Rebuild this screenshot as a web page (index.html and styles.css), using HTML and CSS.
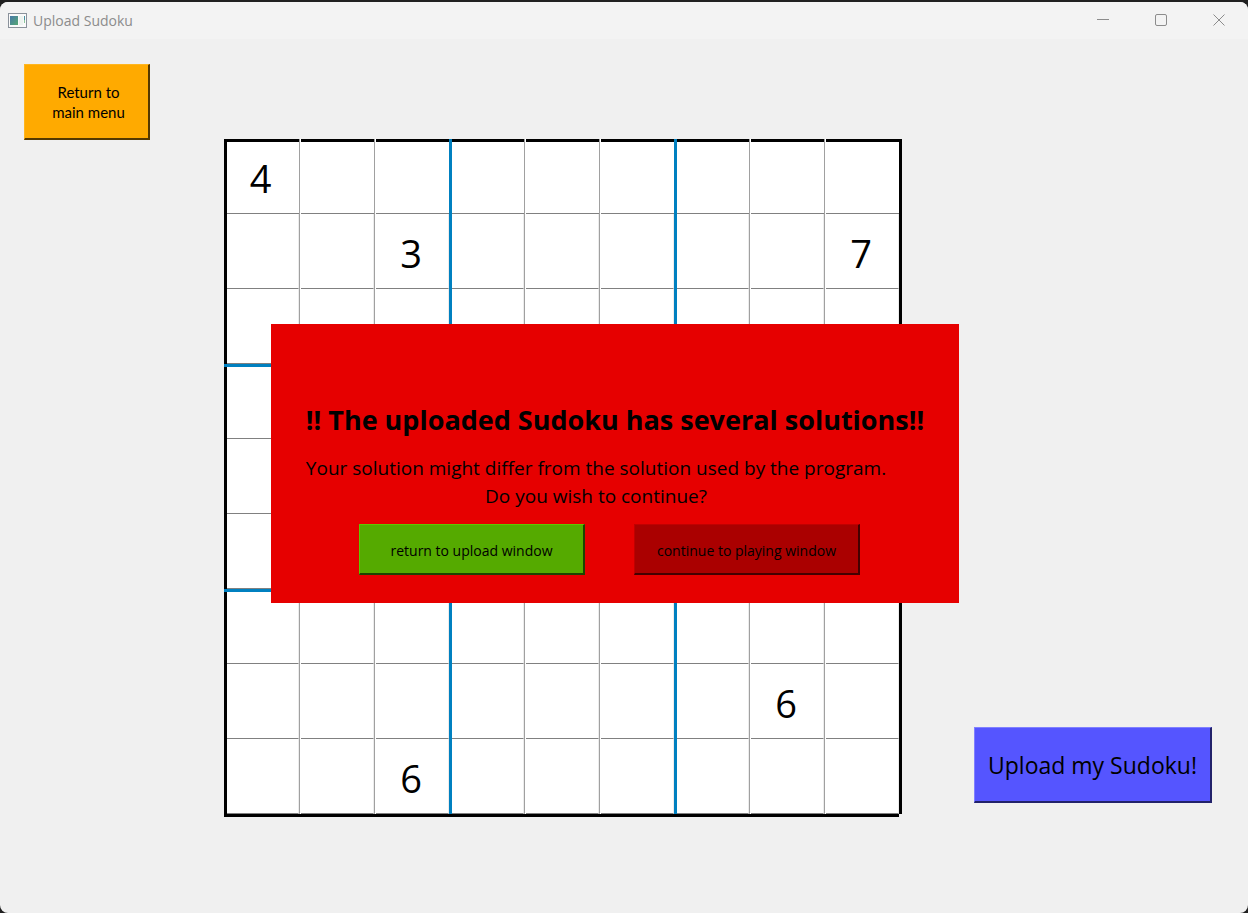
FILE: index.html
```
<!DOCTYPE html>
<html lang="en">
<head>
<meta charset="utf-8">
<title>Upload Sudoku</title>
<link rel="stylesheet" href="styles.css">
</head>
<body>
<div class="window">
  <header class="titlebar">
    <svg class="app-icon" width="19" height="15" viewBox="0 0 19 15" aria-hidden="true">
      <defs><linearGradient id="pane" x1="0" y1="0" x2="1" y2="1"><stop offset="0" stop-color="#4778a8"/><stop offset="1" stop-color="#55a873"/></linearGradient></defs>
      <rect x=".5" y=".5" width="18" height="14" fill="#fafafa" stroke="#8b929b"/>
      <rect x="2" y="3" width="8" height="9" fill="url(#pane)"/>
      <rect x="11" y="3" width="4" height="9" fill="#edf3ef"/>
      <path d="M16.500 3v4" stroke="#4a91a0"/><path d="M16.500 7v3" stroke="#8bc79c"/>
    </svg>
    <h1 class="window-title">Upload Sudoku</h1>
    <div class="window-controls">
      <button type="button" class="control" aria-label="Minimize"><svg width="14" height="14" viewBox="0 0 14 14"><path d="M1 6.500h12"/></svg></button>
      <button type="button" class="control" aria-label="Maximize"><svg width="14" height="14" viewBox="0 0 14 14"><rect x="1.500" y="1.500" width="11" height="11" rx="1.500"/></svg></button>
      <button type="button" class="control" aria-label="Close"><svg width="14" height="14" viewBox="0 0 14 14"><path d="M1.500 1.500l11 11M12.500 1.500l-11 11"/></svg></button>
    </div>
  </header>
  <main class="content">
    <button type="button" class="button button-menu">Return to<br>main menu</button>
    <div class="board-area">
      <div class="board" id="board"></div>
      <section class="dialog" role="alertdialog" aria-labelledby="dialog-title" aria-describedby="dialog-text">
        <h2 class="dialog-title" id="dialog-title">!! The uploaded Sudoku has several solutions!!</h2>
        <p class="dialog-text" id="dialog-text">Your solution might differ from the solution used by the program.<br>Do you wish to continue?</p>
        <div class="dialog-actions">
          <button type="button" class="button button-return">return to upload window</button>
          <button type="button" class="button button-continue">continue to playing window</button>
        </div>
      </section>
    </div>
    <button type="button" class="button button-upload">Upload my Sudoku!</button>
  </main>
</div>
<script src="board.js"></script>
</body>
</html>
```
FILE: board.js
```
const puzzle = [
  "4........",
  "..3.....7",
  ".........",
  ".........",
  ".........",
  ".........",
  ".........",
  ".......6.",
  "..6......"
];
const board = document.getElementById("board");
puzzle.forEach((line, r) => {
  const row = document.createElement("div");
  row.className = "row";
  [...line].forEach((digit, c) => {
    const cell = document.createElement("div");
    cell.className = "cell";
    const input = document.createElement("input");
    input.type = "text";
    input.className = "digit";
    input.maxLength = 1;
    input.setAttribute("aria-label", `Row ${r + 1}, column ${c + 1}`);
    input.value = digit === "." ? "" : digit;
    cell.append(input);
    row.append(cell);
  });
  board.append(row);
});
```
FILE: styles.css
```
* { box-sizing: border-box; }

body {
  margin: 0;
  background: #202020;
  color: #000;
  font-family: "Open Sans", "Noto Sans", sans-serif;
}

.window {
  display: flex;
  flex-direction: column;
  min-height: calc(100vh - 2px);
  margin-top: 2px;
  border-radius: 8px;
  overflow: hidden;
  background: #f0f0f0;
}

.titlebar {
  display: flex;
  align-items: center;
  height: 37px;
  padding-left: 8px;
  background: #f3f3f3;
  color: #8c8c8c;
}

.window-title {
  flex: 1;
  margin: 0 0 0 6px;
  font-size: 14px;
  font-weight: 400;
}

.window-controls {
  display: flex;
  align-self: flex-start;
}

.control {
  display: grid;
  place-items: center;
  width: 58px;
  height: 35px;
  padding: 0;
  border: 0;
  background: transparent;
}

.control svg { fill: none; stroke: #8c8c8c; }

.content {
  flex: 1;
  display: grid;
  grid-template-columns: 126px 676px 238px;
  column-gap: 74px;
  align-items: start;
  align-content: start;
  padding: 25px 36px 24px 24px;
}

.button {
  border-style: solid;
  border-width: 1px 2px 2px 1px;
  padding: 0;
  color: #000;
  font-family: inherit;
}

.button-menu {
  height: 76px;
  padding-left: 4px;
  background: #ffaa00;
  border-color: #ffb61f #553900 #553900 #ffb61f;
  font-family: Lato, sans-serif;
  font-size: 15px;
  line-height: 20px;
}

.board-area {
  position: relative;
  padding-top: 75px;
}

.board {
  width: 675px;
  background: #fff;
  box-shadow: 3px 0 #000, 0 3px #000;
}

.row {
  display: flex;
  height: 75px;
}

.row:nth-child(3n + 4) { border-top: 3px solid #0080c0; }

.cell {
  flex: 0 0 75px;
  display: flex;
  padding-left: 1px;
  border-left: 1px solid #a0a0a0;
}

.cell:first-child {
  padding-left: 0;
  border-left: 3px solid #000;
}

.cell:nth-child(3n + 4) {
  padding-left: 0;
  border-left: 3px solid #0080c0;
}

.digit {
  width: 100%;
  min-width: 0;
  padding: 3px 2px 0 0;
  border: 0;
  border-right: 1px solid #ececec;
  border-bottom: 1px solid #808080;
  background: #fff;
  color: #000;
  font-family: inherit;
  font-size: 38px;
  text-align: center;
}

.row:first-child .digit { box-shadow: inset 0 3px #000; border-right: 0; }

.cell:first-child .digit { padding-right: 5px; }

.dialog {
  position: absolute;
  top: 260px;
  left: 47px;
  width: 688px;
  padding: 72px 0 28px;
  background: #e60000;
}

.dialog-title {
  margin: 0;
  font-size: 27px;
  line-height: 48px;
  text-align: center;
  white-space: nowrap;
}

.dialog-text {
  margin: 10px 38px 14px 0;
  font-size: 19px;
  line-height: 28px;
  text-align: center;
}

.dialog-actions {
  display: flex;
  gap: 49px;
  padding-left: 88px;
}

.button-return,
.button-continue {
  width: 226px;
  height: 51px;
  padding-top: 2px;
  font-size: 14px;
}

.button-return {
  background: #55aa00;
  border-color: #5fc800 #1c4400 #1c4400 #5fc800;
}

.button-continue {
  background: #aa0000;
  border-color: #c00000 #440000 #440000 #c00000;
}

.button-upload {
  align-self: end;
  height: 76px;
  margin-bottom: 11px;
  background: #5555ff;
  border-color: #8080ff #22226a #22226a #8080ff;
  font-size: 23px;
}
```
